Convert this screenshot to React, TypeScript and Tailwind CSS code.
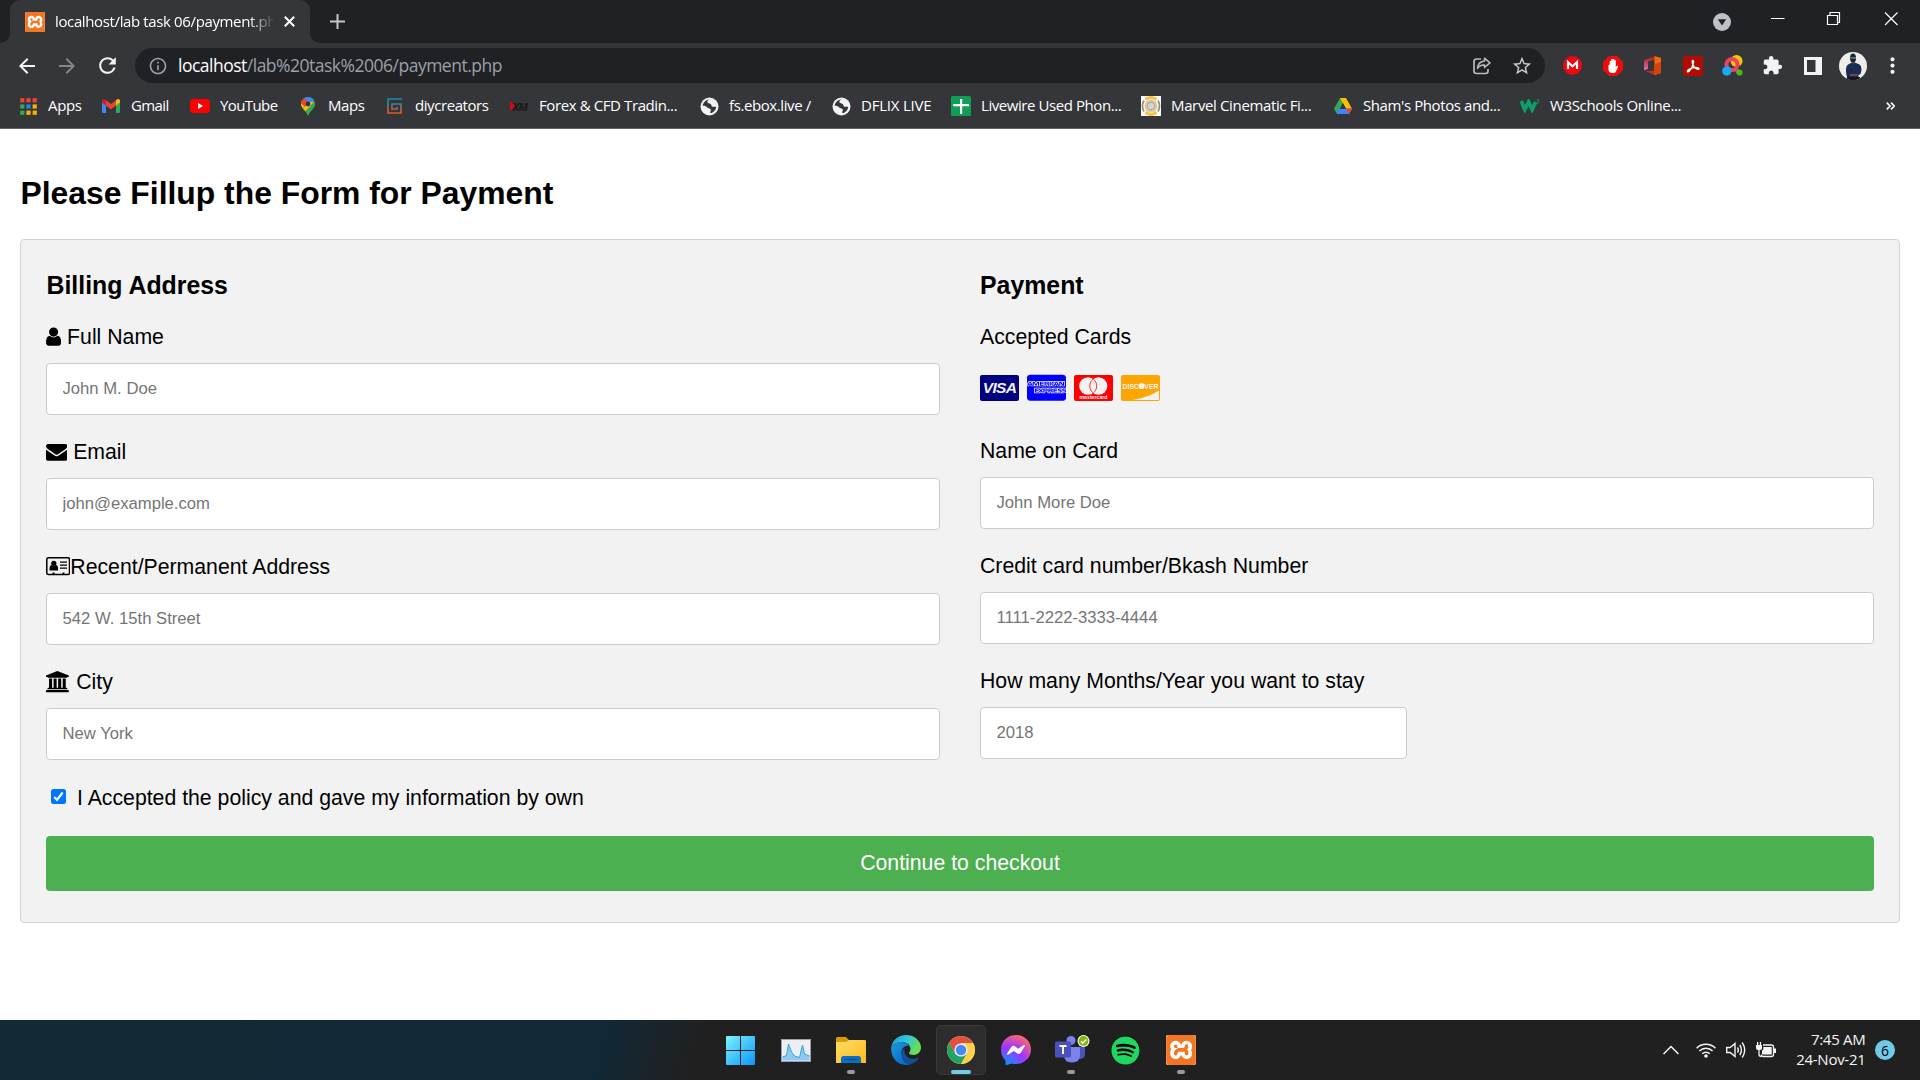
import { type ReactNode } from "react";
import { MdArrowBack, MdArrowForward, MdRefresh, MdStarBorder, MdExtension, MdMoreVert, MdOutlineInfo } from "react-icons/md";
import { FaCcAmex, FaSpotify } from "react-icons/fa";
import { SiXampp } from "react-icons/si";

const Xampp = ({ cls }: { cls: string }) => (
  <span className={cls + " flex shrink-0 items-center justify-center rounded-[2px] bg-white"}>
    <SiXampp className="h-full w-full text-[#f37623]" />
  </span>
);

const Globe = () => (
  <svg width="19" height="19" viewBox="0 0 19 19">
    <circle cx="9.5" cy="9.5" r="9" fill="#f1f3f4" />
    <path d="M10 2.5c-2 .5-3 1.500-2.600 2.800.5 1.500 2.800.8 3.600 2 .6 1 .2 2 1.600 2.400 1.200.3 2.400-.4 3.500.2-.2 3-2.500 5.800-5.800 6.200-.4-1.500.8-2 .6-3.300-.3-1.500-2.600-1.400-3.700-2.400C6 9.300 5 8.600 2.600 8.800c.6-3.400 3.400-6.400 7.400-6.300z" fill="#35363a" />
  </svg>
);

const bookmarks: { label: string; cls: string; lab: string; icon: ReactNode }[] = [
  {
    label: "Apps", cls: "w-[83px]", lab: "tracking-[-0.35px]",
    icon: (
      <svg width="17" height="17" viewBox="0 0 17 17">
        {["#f44336", "#f44336", "#f44336", "#34a853", "#1e88e5", "#fbb300", "#34a853", "#fbb300", "#fbb300"].map((c, i) => (
          <rect key={i} x={(i % 3) * 6.2 + 0.2} y={Math.floor(i / 3) * 6.2 + 0.2} width="4.2" height="4.2" fill={c} />
        ))}
      </svg>
    ),
  },
  {
    label: "Gmail", cls: "w-[89px]", lab: "tracking-[-0.6px]",
    icon: (
      <svg width="18" height="14" viewBox="0 0 18 14">
        <path d="M0 2v10.800Q0 14 1.200 14H4V5z" fill="#4285f4" />
        <path d="M18 2v10.800Q18 14 16.800 14H14V5z" fill="#34a853" />
        <path d="M14 1.300v5.200l4-3V2c0-2-2.200-2.600-3.500-1.300z" fill="#fbbc04" />
        <path d="M4 6.500V1.300l5 3.800 5-3.800v5.200L9 10.300z" fill="#ea4335" />
        <path d="M0 2v1.500l4 3V1.300L3.500.7C2.200-.6 0 0 0 2z" fill="#c5221f" />
      </svg>
    ),
  },
  {
    label: "YouTube", cls: "w-[108px]", lab: "tracking-[-0.6px]",
    icon: (
      <svg width="20" height="14" viewBox="0 0 20 14">
        <rect width="20" height="14" rx="3.500" fill="#f00" />
        <path d="M8 4v6l5-3z" fill="#fff" />
      </svg>
    ),
  },
  {
    label: "Maps", cls: "w-[87px]", lab: "tracking-[-0.4px]",
    icon: (
      <svg width="14" height="19" viewBox="0 0 14 19">
        <clipPath id="pin"><path d="M7 0a7 7 0 0 1 7 7c0 4.500-5 6-7 12C5 13 0 11.500 0 7a7 7 0 0 1 7-7z" /></clipPath>
        <g clipPath="url(#pin)">
          <rect width="14" height="19" fill="#34a853" />
          <path d="M0 13l8-9L0 3z" fill="#fbbc04" />
          <path d="M0 3v3.500l4 3 3.500-5L2 0z" fill="#ea4335" />
          <path d="M2 0l5 5 4.500 2L14 3V0z" fill="#4285f4" />
          <path d="M0 13l4 2 9-10-4 0z" fill="#fbbc04" />
          <path d="M4 15l9-10 3 2-8 12z" fill="#34a853" />
        </g>
        <circle cx="7" cy="7" r="2.400" fill="#35363a" />
      </svg>
    ),
  },
  {
    label: "diycreators", cls: "w-[124px]", lab: "tracking-[-0.43px]",
    icon: (
      <svg width="16" height="16" viewBox="0 0 16 16" fill="none" strokeWidth="1.700">
        <defs><linearGradient id="dg" x1="0" y1="0" x2="0" y2="1"><stop offset=".2" stopColor="#1c8ba8" /><stop offset="1" stopColor="#e8562a" /></linearGradient></defs>
        <path d="M15 1H1v14h13V6H5v5h5V9" stroke="url(#dg)" />
      </svg>
    ),
  },
  {
    label: "Forex & CFD Tradin...", cls: "w-[190px]", lab: "tracking-[-0.4px]",
    icon: (
      <span className="flex items-center">
        <svg width="5" height="10" viewBox="0 0 5 10"><path d="M0 0l5 5-5 5z" fill="#e3000f" /></svg>
        <span className="-ml-[3px] text-[11px] font-bold italic leading-none tracking-tighter text-[#191919]">XM</span>
      </span>
    ),
  },
  { label: "fs.ebox.live /", cls: "w-[132px]", lab: "tracking-[-0.4px]", icon: <Globe /> },
  { label: "DFLIX LIVE", cls: "w-[120px]", lab: "tracking-[-0.22px]", icon: <Globe /> },
  {
    label: "Livewire Used Phon...", cls: "w-[190px]", lab: "tracking-[-0.43px]",
    icon: (
      <svg width="20" height="20" viewBox="0 0 20 20"><rect width="20" height="20" rx="1.500" fill="#109d58" /><path d="M9 3h2.200v5H18v2.200h-6.800V18H9v-7.800H2.200V8H9z" fill="#fff" /></svg>
    ),
  },
  {
    label: "Marvel Cinematic Fi...", cls: "w-[192px]", lab: "tracking-[-0.36px]",
    icon: (
      <svg width="20" height="20" viewBox="0 0 20 20" fill="none">
        <rect width="20" height="20" fill="#fdfcf8" />
        <path d="M4.500 3.500q5.500-4 11 0M4.500 16.500q5.500 4 11 0" stroke="#f3c24f" strokeWidth="3" />
        <circle cx="10" cy="10" r="5.800" stroke="#ecc977" strokeWidth="1.500" />
        <circle cx="10" cy="10" r="4" fill="#cfd3dc" stroke="#a5a29c" strokeWidth="1.400" />
        <path d="M3 4.500q-3 5.500 0 11M17 4.500q3 5.500 0 11" stroke="#958d7c" strokeWidth="1.700" />
      </svg>
    ),
  },
  {
    label: "Sham's Photos and...", cls: "w-[187px]", lab: "tracking-[-0.4px]",
    icon: (
      <svg width="18" height="16" viewBox="0 0 18 16">
        <path d="M6 0h6L3 16 0 10.700z" fill="#34a853" />
        <path d="M6 0h6l6 10.700h-6z" fill="#fbbc04" />
        <path d="M3.200 10.700H18L15 16H3z" fill="#4285f4" />
        <path d="M12 10.700h6L15 16z" fill="#ea4335" />
        <path d="M9 5.300l3 5.400H6z" fill="#35363a" />
      </svg>
    ),
  },
  {
    label: "W3Schools Online...", cls: "w-[180px]", lab: "tracking-[-0.35px]",
    icon: (
      <svg width="20" height="14" viewBox="0 0 20 14" fill="none" stroke="#0b9f6b">
        <path d="M1.200 2l3.600 8.500L8.600 3l3.600 7.500 3.400-7.500" strokeWidth="3.800" />
        <path d="M16.600.8h2.400l-1.200 1.400c1.800 0 1.600 2.600-1.300 1.800" strokeWidth=".9" />
      </svg>
    ),
  },
];

function Field({ label, icon, ph, half }: { label: string; icon?: ReactNode; ph: string; half?: boolean }) {
  return (
    <div className="mb-[23px]">
      <label className="mb-[14px] flex h-[26px] items-end whitespace-pre leading-6">
        {icon && <span className="flex h-6 items-center">{icon}</span>}
        <span>{label}</span>
      </label>
      <input
        placeholder={ph}
        className={
          (half ? "w-[427px]" : "w-full") +
          " block h-[52px] rounded-[4px] border border-[#ccc] bg-white px-[15.5px] text-[16.667px] placeholder:text-[#757575] outline-none"
        }
      />
    </div>
  );
}

const Slot = ({ children }: { children?: ReactNode }) => <div className="flex w-10 shrink-0 items-center justify-center">{children}</div>;

function Task({ children, pill, active }: { children: ReactNode; pill?: boolean; active?: boolean }) {
  return (
    <div className={"relative flex h-[50px] w-[50px] items-center justify-center rounded-[5px] " + (active ? "border border-[#3a3a3a] bg-[#2d2d2d]" : "")}>
      {children}
      {pill && <span className="absolute bottom-[1px] h-1 w-2 rounded-full bg-[#9a9a9a]" />}
      {active && <span className="absolute bottom-0 h-1 w-5 rounded-full bg-[#76c9e8]" />}
    </div>
  );
}

export default function App() {
  return (
    <div className="flex h-[1080px] w-[1920px] flex-col overflow-hidden bg-white font-['Liberation_Sans',Arial,sans-serif] text-black">
      <header className="shrink-0 bg-[#35363a] font-['Open_Sans','Noto_Sans',sans-serif] text-white">
        <div className="flex h-[43px] bg-[#202124]">
          <div className="flex w-[10px] items-end bg-[#35363a]"><div className="h-full w-full rounded-br-[10px] bg-[#202124]" /></div>
          <div className="flex w-[300px] items-center rounded-t-[10px] bg-[#35363a] pl-[15px]">
            <Xampp cls="h-5 w-5" />
            <div className="ml-[10px] w-[220px] whitespace-nowrap pb-px text-[15px] tracking-[-0.37px] [mask-image:linear-gradient(to_right,black_88%,transparent)]">
              localhost/lab task 06/payment.ph
            </div>
            <svg className="ml-[9px]" width="11" height="11" viewBox="0 0 11 11" stroke="#fff" strokeWidth="2"><path d="M.8.8l9.400 9.400M10.200.8L.8 10.200" /></svg>
          </div>
          <div className="w-[10px] bg-[#35363a]"><div className="h-full w-full rounded-bl-[10px] bg-[#202124]" /></div>
          <svg className="ml-[10px] mt-[14px]" width="15" height="15" viewBox="0 0 15 15" stroke="#c4c6ca" strokeWidth="2"><path d="M7.500 0v15M0 7.500h15" /></svg>
          <div className="ml-auto flex">
            <svg className="mr-[40px] mt-[13px]" width="18" height="18" viewBox="0 0 18 18"><circle cx="9" cy="9" r="9" fill="#bdc1c6" /><path d="M4.800 6.200h8.400L9 12.500z" fill="#202124" /></svg>
            <svg className="mr-[21px] mt-[12px]" width="128" height="14" viewBox="0 0 128 14" fill="none" stroke="#fff">
              <path d="M0 6.500h13.500" />
              <path d="M56.500 3.500h10v9h-10zM59 3.500v-3h9.500v10H66.500" strokeWidth="1.200" />
              <path d="M114 .5l12.500 12.500M126.500 .5l-12.500 12.500" strokeWidth="1.200" />
            </svg>
          </div>
        </div>
        <div className="flex h-[45px] items-center pl-[7px]">
          <Slot><MdArrowBack size={24} color="#f1f3f4" /></Slot>
          <Slot><MdArrowForward size={24} color="#85868a" /></Slot>
          <Slot><MdRefresh size={25} color="#f1f3f4" /></Slot>
          <div className="ml-[8px] flex h-[35px] w-[1410px] items-center rounded-full bg-[#202124] pl-[13px]">
            <MdOutlineInfo size={20} color="#9aa0a6" />
            <span className="ml-[10px] text-[17.500px] tracking-[-0.5px]">
              localhost<span className="text-[#9aa0a6]">/lab%20task%2006/payment.php</span>
            </span>
            <div className="ml-auto mr-[3px] flex">
              <Slot>
                <svg width="18" height="18" viewBox="0 0 18 18" fill="none" stroke="#b9bbbf" strokeWidth="1.700">
                  <path d="M8 2H3.500Q1 2 1 4.500v9.800Q1 16.500 3.500 16.500h9Q15 16.500 15 14.300V12" />
                  <path d="M11.500 1.200l5.500 4.600-5.500 4.600V8c-3.500-.2-5.500.8-7 3.500.3-4 2.800-7 7-7.400z" strokeWidth="1.500" strokeLinejoin="round" />
                </svg>
              </Slot>
              <Slot><MdStarBorder size={22} color="#c9cbce" /></Slot>
            </div>
          </div>
          <div className="ml-[7.500px] flex h-10">
            <Slot><svg width="19" height="19" viewBox="0 0 19 19"><circle cx="9.500" cy="9.500" r="9.500" fill="#f0050f" /><path d="M5 13V6.200l4.500 4 4.500-4V13" fill="none" stroke="#fff" strokeWidth="2.200" /></svg></Slot>
            <Slot>
              <svg width="20" height="20" viewBox="0 0 20 20">
                <path d="M6 0h8l6 6v8l-6 6H6l-6-6V6z" fill="#f00a0a" />
                <path d="M5.500 9l1.200-.5V5.200q.8-1 1.500 0V3.600q.8-1 1.500 0v-.4q.8-1 1.500 0v1q.9-.8 1.600.2V11l1.600-1.400q1 0 .7 1l-2.400 5.400q-.5 1-2 1H8.800q-3.300-.5-3.300-3.500z" fill="#fff" />
              </svg>
            </Slot>
            <Slot>
              <svg width="17" height="19" viewBox="0 0 17 19">
                <defs><linearGradient id="of" x1="0" y1="0" x2="0" y2="1"><stop offset="0" stopColor="#a31f10" /><stop offset="1" stopColor="#e86ab5" /></linearGradient></defs>
                <path d="M11 0L1.500 3.500Q0 4 0 5.500V13q0 1.500 1.500 1l2.500-1.200V5.500l7-2z" fill="url(#of)" />
                <path d="M2 15l9 1v3z" fill="#d9335a" /><path d="M2 15l9-.5V19z" fill="#c42a20" />
                <path d="M10.500 0L17 2v15l-6.500 2z" fill="#f26a0c" /><path d="M10.500 8L17 6v11l-6.500 2z" fill="#d6430c" />
              </svg>
            </Slot>
            <Slot>
              <svg width="20" height="20" viewBox="0 0 20 20"><rect width="20" height="20" rx="2.500" fill="#b30b00" /><path d="M9.800 4.500c1.300 0 .8 3.500-1 7-1.300 2.500-3.500 5-4.300 4.200-.8-1 2-3.200 5.200-3.800 3.300-.7 6.300-.3 6.300.8s-3 .6-4.700-1.400C9.800 9.500 8.500 4.500 9.800 4.500z" fill="none" stroke="#fff" strokeWidth="1.400" /></svg>
            </Slot>
            <Slot>
              <svg width="21" height="21" viewBox="0 0 21 21">
                <circle cx="14.500" cy="6" r="6" fill="#fdc500" /><path d="M11 5l7 6" stroke="#35363a" strokeWidth="1" />
                <circle cx="10" cy="9.500" r="5.500" fill="none" stroke="#ee3f68" strokeWidth="4" /><path d="M13 13l4 5" stroke="#ee3f68" strokeWidth="4" />
                <circle cx="4.800" cy="16" r="4.700" fill="#1ba8f5" /><circle cx="17.500" cy="17.500" r="3" fill="#42c20e" />
              </svg>
            </Slot>
            <Slot><MdExtension size={21} color="#f1f3f4" /></Slot>
            <Slot><svg width="18" height="18" viewBox="0 0 18 18"><path d="M0 0h18v18H0zM3 3v12h8.500V3z" fill="#f1f3f4" fillRule="evenodd" /></svg></Slot>
            <Slot>
              <svg width="28" height="28" viewBox="0 0 28 28">
                <clipPath id="av"><circle cx="14" cy="14" r="14" /></clipPath>
                <g clipPath="url(#av)">
                  <rect width="28" height="28" fill="#efedea" />
                  <path d="M8.500 28L7 20q-.5-7 3-8l3-1.500h2.500l4 1.500q3 1 3 6l-1 4-2 1v5z" fill="#1a2c55" />
                  <path d="M11 22h8l-1 2h-7zM12.500 9h3.500l-1.500 4z" fill="#6a4a40" />
                  <ellipse cx="14" cy="6" rx="3" ry="4.600" fill="#2a1f22" /><path d="M11.500 5h5.500v1.800h-5.500z" fill="#2d8aa8" />
                  <path d="M8 25h13v3H8z" fill="#14161f" />
                </g>
              </svg>
            </Slot>
            <Slot><MdMoreVert size={25} color="#f1f3f4" /></Slot>
          </div>
        </div>
        <div className="flex h-[41px] items-center border-b border-[#5f6064] pb-[4px] pl-[18px]">
          {bookmarks.map((b) => (
            <div key={b.label} className={b.cls + " flex shrink-0 items-center gap-[10px]"}>
              <span className="flex h-5 w-5 shrink-0 items-center justify-center">{b.icon}</span>
              <span className={"whitespace-nowrap pb-[2px] text-[15px] leading-5 " + b.lab}>{b.label}</span>
            </div>
          ))}
          <svg className="mb-px ml-auto mr-[25px]" width="9" height="8" viewBox="0 0 9 8" fill="none" stroke="#f1f3f4" strokeWidth="1.700"><path d="M.8.6L4 4 .8 7.400M5 .6L8.200 4 5 7.400" /></svg>
        </div>
      </header>

      <main className="flex-1 px-5 text-[21.25px]">
        <h2 className="mt-[46px] h-9 pl-[0.5px] text-[31.875px] font-bold leading-9">Please Fillup the Form for Payment</h2>
        <form className="mt-[28px] h-[684px] rounded-[4px] border border-[#d3d3d3] bg-[#f2f2f2] px-[25px]">
          <div className="grid grid-cols-2 gap-x-10">
            <div className="pt-[31px]">
              <h3 className="mb-[24px] h-7 pl-[0.5px] text-[24.86px] font-bold leading-7">Billing Address</h3>
              <Field label=" Full Name" ph="John M. Doe" icon={
                <svg width="15.2" height="21.25" viewBox="256 0 1280 1792"><path d="M1536 1399q0 109-62.5 187t-150.5 78h-854q-88 0-150.5-78t-62.5-187q0-85 8.5-160.5t31.5-152 58.5-131 94-89 134.5-34.5q131 128 313 128t313-128q76 0 134.5 34.5t94 89 58.5 131 31.5 152 8.5 160.5zm-256-887q0 159-112.5 271.5t-271.5 112.5-271.5-112.5-112.5-271.5 112.5-271.5 271.5-112.5 271.5 112.5 112.5 271.5z" /></svg>
              } />
              <Field label=" Email" ph="john@example.com" icon={
                <svg width="21.25" height="21.25" viewBox="0 0 1792 1792"><path d="M1792 710v794q0 66-47 113t-113 47h-1472q-66 0-113-47t-47-113v-794q44 49 101 87 362 246 497 345 57 42 92.5 65.5t94.5 48 110 24.5h2q51 0 110-24.5t94.5-48 92.5-65.5q170-123 498-345 57-39 100-87zm0-294q0 79-49 151t-122 123q-376 261-468 325-10 7-42.5 31t-54 38.500-52 32.500-57.500 27-50 9h-2q-23 0-50-9t-57.500-27-52-32.500-54-38.500-42.500-31q-91-64-262-182.500t-205-142.500q-62-42-117-115.500t-55-136.500q0-78 41.500-130t118.500-52h1472q65 0 112.500 47t47.500 113z" /></svg>
              } />
              <Field label="Recent/Permanent Address" ph="542 W. 15th Street" icon={
                <svg width="24.3" height="21.25" viewBox="0 0 24.3 21.25">
                  <rect x=".8" y="1.8" width="22.7" height="16.800" rx="1.600" fill="none" stroke="#000" strokeWidth="1.500" />
                  <circle cx="7.800" cy="7.300" r="2.600" /><path d="M3.600 14.500q-.6-4.800 2-5.500 2.200 1.400 4.400 0 2.600.7 2 5.500z" />
                  <path d="M14 6.200h7M14 9.200h7M14 12.200h7" stroke="#000" strokeWidth="1.300" />
                  <path d="M6.500 17.200h2M16.500 17.200h2" stroke="#000" strokeWidth="1.500" />
                </svg>
              } />
              <Field label=" City" ph="New York" icon={
                <svg width="24.3" height="22.800" viewBox="0 0 2048 1920"><path d="M960 0l960 384v128h-128q0 26-20.500 45t-48.500 19h-1526q-28 0-48.500-19t-20.500-45h-128v-128zm-704 640h256v768h128v-768h256v768h128v-768h256v768h128v-768h256v768h59q28 0 48.500 19t20.500 45v64h-1664v-64q0-26 20.500-45t48.500-19h59v-768zm1595 960q28 0 48.500 19t20.500 45v128h-1920v-128q0-26 20.500-45t48.500-19h1782z" /></svg>
              } />
            </div>
            <div className="pt-[31px]">
              <h3 className="mb-[26px] h-7 text-[24.86px] font-bold leading-7">Payment</h3>
              <div className="h-6 leading-6">Accepted Cards</div>
              <div className="mb-[36px] mt-[26px] flex h-[26px] items-center gap-[8px]">
                <div className="flex h-[26px] w-[39px] items-center justify-center overflow-hidden rounded-[2px] bg-[navy]">
                  <span className="text-[15.500px] font-bold italic leading-none tracking-[-0.7px] text-[#f2f2f2]">VISA</span>
                </div>
                <FaCcAmex preserveAspectRatio="none" className="h-[29.700px] w-[39px] shrink-0 text-[blue]" />
                <svg width="39" height="26" viewBox="0 0 39 26">
                  <rect width="39" height="26" rx="2" fill="red" />
                  <circle cx="14" cy="11" r="8.800" fill="#f2f2f2" />
                  <circle cx="24.500" cy="11" r="8.800" fill="#f2f2f2" />
                  <path d="M19.250 4a8.800 8.800 0 0 1 0 14 8.800 8.800 0 0 1 0-14z" fill="none" stroke="red" strokeWidth=".8" />
                  <text x="19.500" y="23.800" textAnchor="middle" fontSize="5.200" fontWeight="700" fill="#f2f2f2">mastercard</text>
                </svg>
                <svg width="39" height="26" viewBox="0 0 39 26">
                  <rect width="39" height="26" rx="2" fill="orange" />
                  <path d="M38 15.500V24q0 1-1 1H12q15-2.500 26-9.500z" fill="#f2f2f2" />
                  <text x="1.500" y="13.600" fontSize="7.200" fontWeight="700" fill="#f2f2f2" textLength="36" lengthAdjust="spacingAndGlyphs">DISCOVER</text>
                  <circle cx="20.600" cy="11" r="2.900" fill="#f2f2f2" />
                </svg>
              </div>
              <Field label="Name on Card" ph="John More Doe" />
              <Field label="Credit card number/Bkash Number" ph="1111-2222-3333-4444" />
              <Field label="How many Months/Year you want to stay" ph="2018" half />
            </div>
          </div>
          <label className="mb-[26px] mt-[3px] flex h-6 items-center leading-6">
            <span className="mb-[4px] ml-[5px] mr-[11px] flex h-[15px] w-[15px] items-center justify-center rounded-[2.500px] bg-[#0075ff]">
              <svg width="11" height="11" viewBox="0 0 11 11" fill="none" stroke="#fff" strokeWidth="2.200"><path d="M1.200 6l2.800 2.800L9.600 1.500" /></svg>
            </span>
            <span>I Accepted the policy and gave my information by own</span>
          </label>
          <button type="button" className="flex h-[55px] w-full items-center justify-center rounded-[4px] bg-[#4caf50] text-white">Continue to checkout</button>
        </form>
      </main>

      <footer className="relative flex h-[60px] shrink-0 items-center bg-[#202020] bg-[linear-gradient(105deg,#112a35_0,#112836_31.5%,#1a242a_34%,#202020_36.500%)] font-['Open_Sans','Noto_Sans',sans-serif] text-[#f5f5f5]">
        <div className="ml-[716px] flex gap-[5px]">
          <Task>
            <svg className="mr-[2px]" width="29" height="29" viewBox="0 0 29 29"><defs><linearGradient id="wn" gradientUnits="userSpaceOnUse" x1="0" y1="0" x2="29" y2="29"><stop offset="0" stopColor="#7df3fd" /><stop offset="1" stopColor="#0a95fb" /></linearGradient></defs><path d="M1 0h13v14H0V1q0-1 1-1zM15 0h13q1 0 1 1v13H15zM0 15h14v14H1q-1 0-1-1zM15 15h14v13q0 1-1 1H15z" fill="url(#wn)" /></svg>
          </Task>
          <Task>
            <svg width="30" height="23" viewBox="0 0 30 23"><rect x=".5" y=".5" width="29" height="22" fill="#eceef2" stroke="#9aa0ac" /><path d="M1.500 18l4-1.500L7.500 5l3 8 3 4 5 1.500L21.500 6l2 9 5 2v4.500h-27z" fill="#8ccaf0" /><path d="M1.500 18l4-1.500L7.500 5l3 8 3 4 5 1.500L21.500 6l2 9 5 2" fill="none" stroke="#3a9fe0" /></svg>
          </Task>
          <Task pill>
            <svg width="30" height="27" viewBox="0 0 30 27"><defs><linearGradient id="fo" x1="0" y1="0" x2="1" y2="1"><stop offset="0" stopColor="#ffdd6b" /><stop offset="1" stopColor="#fcb91a" /></linearGradient></defs><path d="M0 1.500Q0 0 1.500 0h8.500l3 3h15.500Q30 3 30 4.500V9H0z" fill="#dc9a06" /><path d="M0 5h10l3-2h15.500Q30 3 30 4.500V26H0z" fill="url(#fo)" /><path d="M5 26v-4.500Q5 19 7.500 19h15q2.500 0 2.500 2.500V26z" fill="#0c70c0" /><path d="M8.500 22.500h13" stroke="#0a4d8c" strokeWidth="1.200" /></svg>
          </Task>
          <Task>
            <svg width="30" height="30" viewBox="0 0 30 30">
              <defs>
                <linearGradient id="e1" x1="0" y1="0" x2="1" y2=".4"><stop offset="0" stopColor="#1aa0e0" /><stop offset=".55" stopColor="#35c6d6" /><stop offset="1" stopColor="#6be04f" /></linearGradient>
                <linearGradient id="e2" x1="0" y1="0" x2="1" y2="1"><stop offset="0" stopColor="#1b9be0" /><stop offset="1" stopColor="#0c5cc0" /></linearGradient>
              </defs>
              <path d="M.2 13C1 5.500 7 0 15 0c9 0 15 6.500 15 12.500 0 4.500-3.500 7.500-7.500 7.500-3 0-4.500-1-4.500-2 0-.8 1.500-1.500 1.500-4C19.500 9.500 15 7 10.500 7 5.500 7 1.500 9.500.2 13z" fill="url(#e1)" />
              <path d="M.2 13C1.500 9.500 5.500 7 10.500 7c3.500 0 6 1.500 7.500 4-4-1-7.500 2.500-7.500 7 0 6 4.500 10.500 10 10.800C18.500 30 16.500 30 15 30 6 30-.5 22 .2 13z" fill="url(#e2)" />
              <path d="M13.500 13C10 16 9.500 22 12.500 26c2.500 3.200 6 3.500 8 2.800 3-1 5.500-3 7-5.300.4-.6-.1-1-.7-.7C20 26 12 22 13.500 13z" fill="#11509c" />
            </svg>
          </Task>
          <Task active>
            <svg width="28" height="28" viewBox="0 0 28 28">
              <circle cx="14" cy="14" r="14" fill="#fdd04f" />
              <path d="M1.880 7A14 14 0 0 1 26.120 7H14L8 17.500z" fill="#dd5144" />
              <path d="M1.880 7A14 14 0 0 0 14 28l6-10.500H8z" fill="#1fa463" />
              <path d="M14 7h12.100A14 14 0 0 1 14 28l6-10.500z" fill="#fdd04f" />
              <circle cx="14" cy="14" r="6.600" fill="#f1f1f1" /><circle cx="14" cy="14" r="5.200" fill="#4688f4" />
            </svg>
          </Task>
          <Task>
            <svg width="30" height="30" viewBox="0 0 30 30"><defs><radialGradient id="ms" cx=".2" cy="1" r="1.100"><stop offset="0" stopColor="#0a95ff" /><stop offset=".55" stopColor="#a033ff" /><stop offset="1" stopColor="#ff6a68" /></radialGradient></defs><path d="M15 0c8.500 0 15 6.200 15 14.500S23.500 29 15 29c-1.500 0-3-.2-4.300-.6L6 30c-.8.300-1.500-.2-1.500-1v-3.500C1.500 23 0 19 0 14.500 0 6.200 6.500 0 15 0z" fill="url(#ms)" /><path d="M6 18.700l4.400-7c.7-1.100 2.200-1.400 3.200-.6l3.500 2.600 5.800-3.700c.5-.3 1.500.3 1.100 1l-4.400 7c-.7 1.100-2.200 1.400-3.200.6L12.900 16 7 19.700c-.6.4-1.500-.3-1-1z" fill="#fff" /></svg>
          </Task>
          <Task pill>
            <svg className="mb-[2px] ml-[2px] shrink-0" width="35" height="28" viewBox="0 0 35 28">
              <circle cx="16" cy="5.500" r="4.500" fill="#7b83eb" /><path d="M21 12h9v7q0 5-6 5z" fill="#4b53bc" />
              <path d="M9 12h16v8q0 7.500-8 7.500T9 20z" fill="#7b83eb" />
              <rect y="6.500" width="16" height="16" rx="1.500" fill="#4a51ba" /><path d="M4.500 11h7M8 11v8" stroke="#fff" strokeWidth="1.900" />
              <circle cx="28.500" cy="6" r="6" fill="#fff" /><circle cx="28.500" cy="6" r="4.900" fill="#7db80a" /><path d="M25.900 6.200l1.900 1.900 3.500-3.700" fill="none" stroke="#fff" strokeWidth="1.500" />
            </svg>
          </Task>
          <Task><span className="mr-px flex h-7 w-7 items-center justify-center rounded-full bg-black"><FaSpotify className="h-[29px] w-[29px] shrink-0 text-[#1ed760]" /></span></Task>
          <Task pill><Xampp cls="h-[30px] w-[30px]" /></Task>
        </div>
        <svg className="ml-[457px]" width="16" height="10" viewBox="0 0 16 10" fill="none" stroke="#f5f5f5" strokeWidth="1.500"><path d="M.5 9L8 1.500 15.500 9" /></svg>
        <svg className="ml-[17px]" width="20" height="15" viewBox="0 0 20 15" fill="none" stroke="#f5f5f5" strokeWidth="1.500"><path d="M.6 5.200a13.300 13.300 0 0 1 18.800 0M3.400 8a9.300 9.300 0 0 1 13.200 0M6.200 10.800a5.400 5.400 0 0 1 7.600 0" /><circle cx="10" cy="13" r="1.800" fill="#f5f5f5" stroke="none" /></svg>
        <svg className="ml-[10px]" width="20" height="18" viewBox="0 0 20 18" fill="none" stroke="#f5f5f5" strokeWidth="1.400"><path d="M.7 6.500v5h3.500L9 15.500v-13L4.200 6.500zM11.500 6.500q1.600 2.500 0 5M13.800 4q3.200 5 0 10M16.200 1.500q5 7.500 0 15" /></svg>
        <svg className="ml-[10px]" width="20" height="17" viewBox="0 0 20 17" fill="none" stroke="#f5f5f5"><path d="M7 3h8.500q2 0 2 2v7.500q0 2-2 2H7q-1.500 0-1.500-2" strokeWidth="1.300" /><path d="M7.300 5h8.400v7.500H7q-1 0-1-1V8.500l1.300-1zM18 6.500h2v4.500h-2zM0 3h6v3q0 2-2 2H2Q0 8 0 6zM1 0h1.300v3H1zM3.800 0h1.300v3H3.800z" fill="#f5f5f5" stroke="none" /><path d="M3 8v4.500q0 2 2.500 2" strokeWidth="1.300" /></svg>
        <div className="mb-[2px] ml-auto mr-[54.500px] text-right text-[15px] leading-5 tracking-[-0.28px]"><div>7:45 AM</div><div>24-Nov-21</div></div>
        <span className="absolute right-[25px] top-5 flex h-5 w-5 items-center justify-center rounded-full bg-[#70cbe8] text-[14px] text-black">6</span>
      </footer>
    </div>
  );
}
